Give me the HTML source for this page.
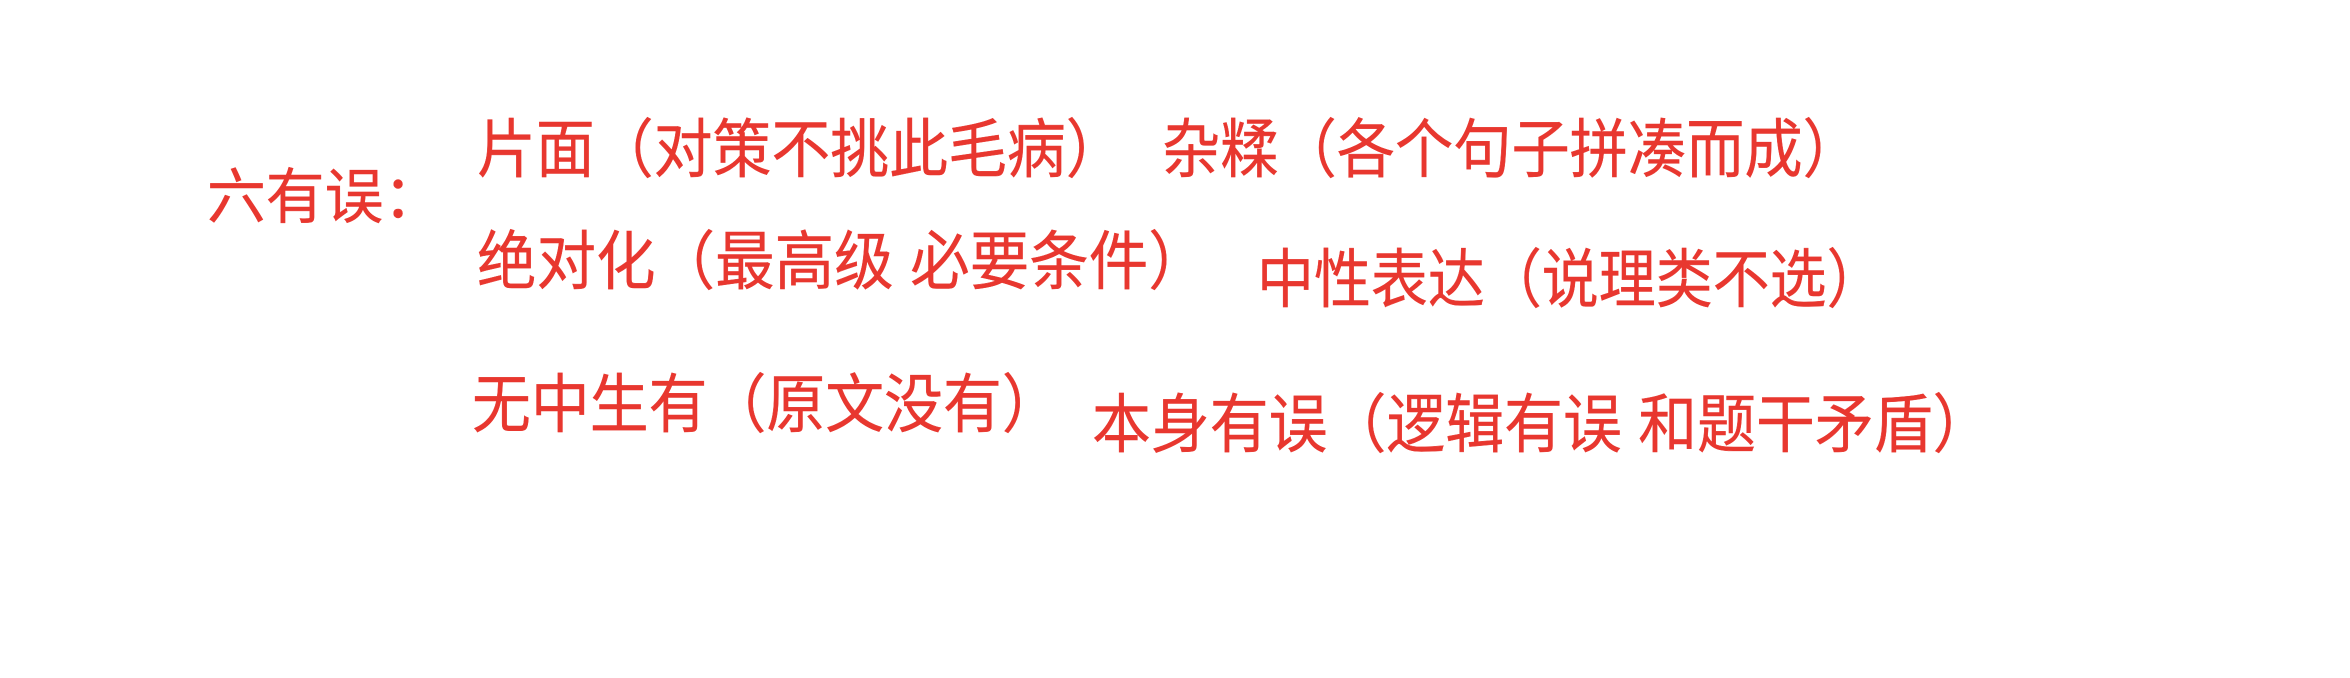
<!DOCTYPE html>
<html><head><meta charset="utf-8"><style>
html,body{margin:0;padding:0;background:#fff;width:2350px;height:678px;overflow:hidden}
div{position:absolute;white-space:pre;color:#e8372f;font-family:"Liberation Sans","Noto Sans CJK SC",sans-serif;font-size:64px;line-height:1;transform-origin:0 0;-webkit-text-stroke:0.4px #e8372f}
</style></head><body>
<div style="left:207px;top:168px;font-size:60px;transform:scaleX(0.98)">六有误：</div>
<div style="left:477px;top:118px;transform:scaleX(0.92)">片面（对策不挑此毛病）</div>
<div style="left:1162px;top:118px;transform:scaleX(0.91)">杂糅（各个句子拼凑而成）</div>
<div style="left:477px;top:230px;transform:scaleX(0.93)">绝对化（最高级 必要条件）</div>
<div style="left:1257px;top:248px;transform:scaleX(0.89)">中性表达（说理类不选）</div>
<div style="left:472px;top:373px;transform:scaleX(0.92)">无中生有（原文没有）</div>
<div style="left:1092px;top:393px;transform:scaleX(0.92)">本身有误（逻辑有误 和题干矛盾）</div>
</body></html>
